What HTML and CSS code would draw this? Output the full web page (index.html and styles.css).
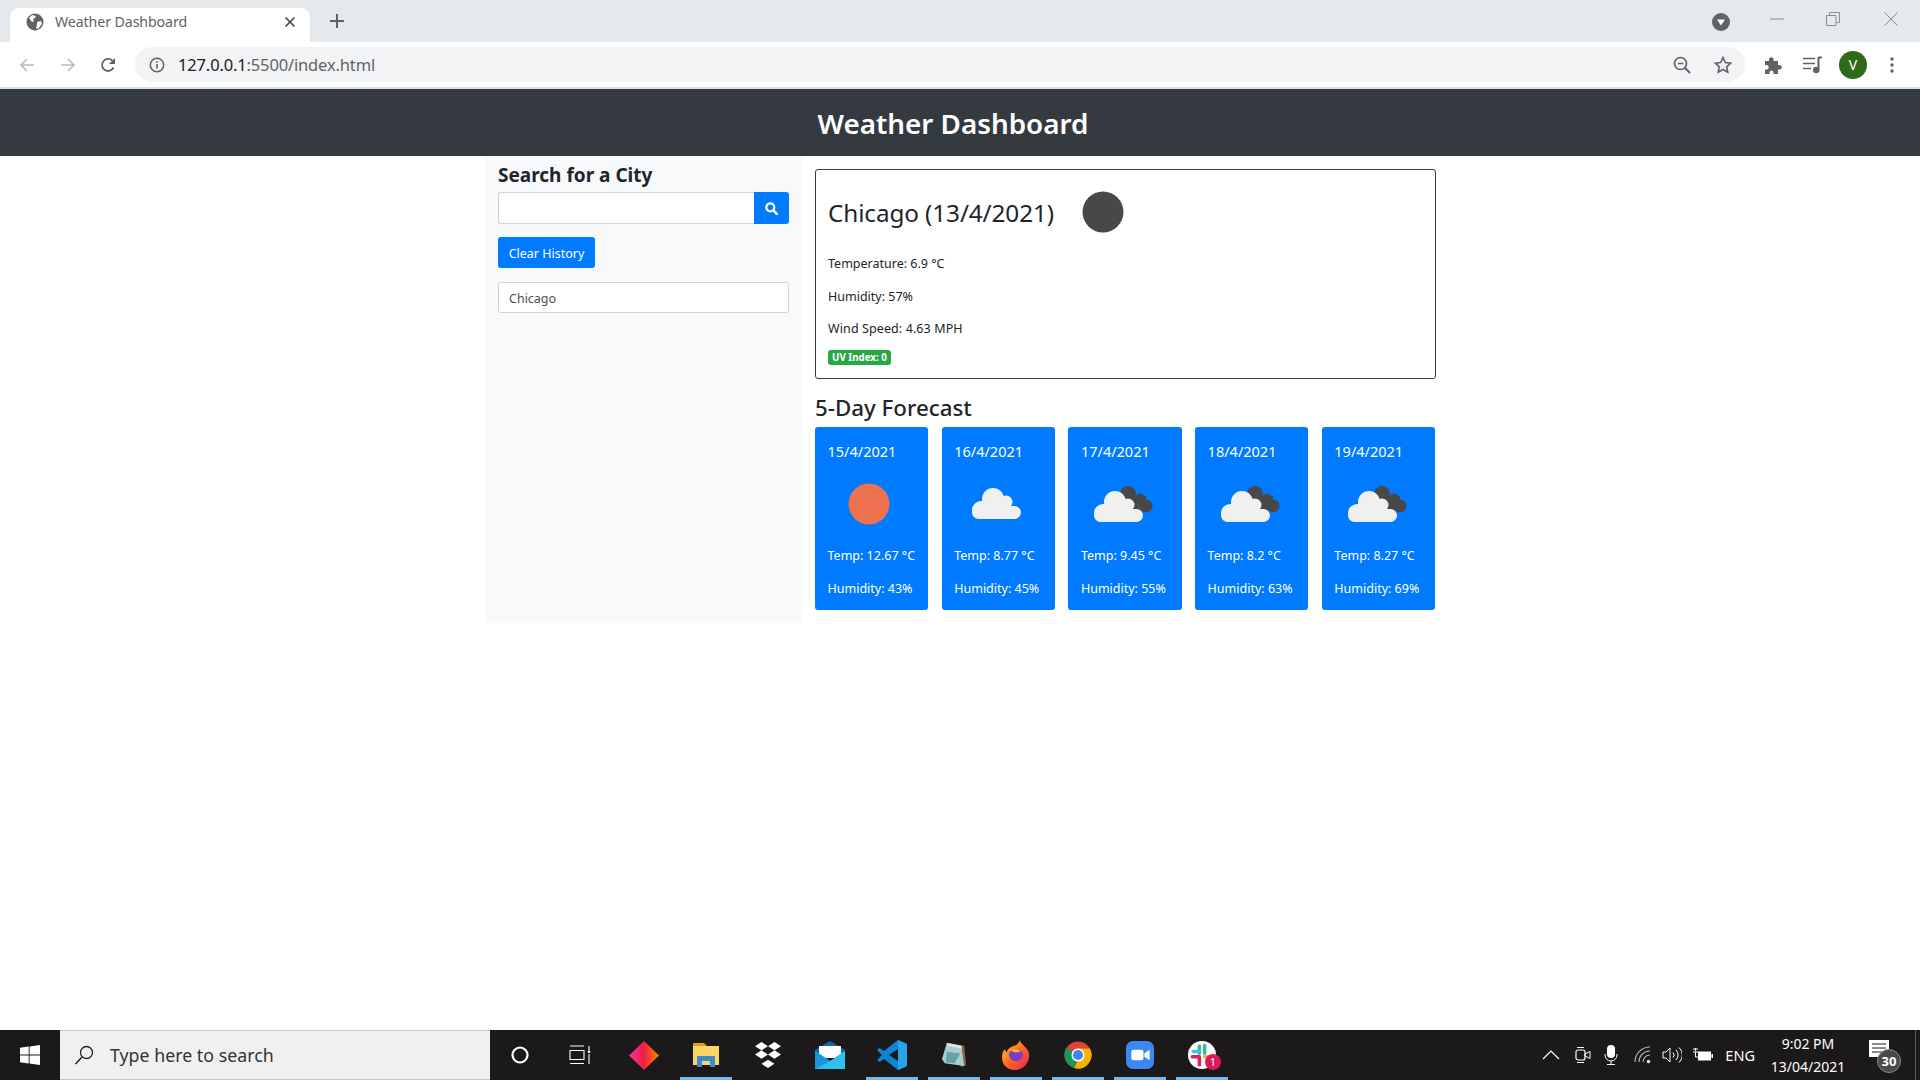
FILE: index.html
```html
<!DOCTYPE html>
<html lang="en">
<head>
<meta charset="utf-8">
<title>Weather Dashboard</title>
<link rel="stylesheet" href="styles.css">
</head>
<body>
<svg class="defs" width="0" height="0" aria-hidden="true">
  <defs>
    <g id="cloud-light">
      <circle cx="34" cy="39" r="11"/><circle cx="47" cy="42" r="6.5"/><circle cx="22" cy="50" r="9"/>
      <rect x="13" y="46" width="49" height="13" rx="6.5"/><rect x="22" y="41" width="25" height="18"/>
    </g>
    <g id="broken">
      <g fill="#48484a"><circle cx="47" cy="31" r="8"/><circle cx="59" cy="35" r="4.5"/><circle cx="65" cy="43" r="6.5"/><rect x="45" y="33" width="20" height="14"/></g>
      <use href="#cloud-light" fill="#f0f0f0"/>
    </g>
  </defs>
</svg>

<header class="browser">
  <div class="tabstrip">
    <div class="tab">
      <svg class="favicon" viewBox="0 0 18 18"><circle cx="9" cy="9" r="8.5" fill="#5f6368"/><path d="M3 5l3-3 4 1-1 2-2 1 1 2-2 1zM11 9l4-1 1 3-4 5-2-1 1-3z" fill="#fff"/></svg>
      <span class="tab-title">Weather Dashboard</span>
      <svg class="tab-close" viewBox="0 0 12 12"><path d="M1.5 1.5l9 9M10.5 1.5l-9 9" stroke="#44474a" stroke-width="1.7"/></svg>
    </div>
    <svg class="tab-new" viewBox="0 0 16 16"><path d="M8 1v14M1 8h14" stroke="#5f6368" stroke-width="2"/></svg>
    <svg class="tab-search" viewBox="0 0 18 18"><circle cx="9" cy="9" r="9" fill="#5f6368"/><path d="M5 6.5h8l-4 6z" fill="#fff"/></svg>
    <svg class="win-btn win-min" viewBox="0 0 14 14"><path d="M0 7h14" stroke="#8a8d90"/></svg>
    <svg class="win-btn win-max" viewBox="0 0 14 14"><path d="M.5 3.5h9.500v10h-9.500zM3.500 3V.5h10v10H10.500" stroke="#8a8d90" fill="none"/></svg>
    <svg class="win-btn win-close" viewBox="0 0 14 14"><path d="M.5.5l13 13M13.500.5l-13 13" stroke="#8a8d90"/></svg>
  </div>
  <div class="toolbar">
    <svg class="nav nav-back" viewBox="0 0 16 16"><path d="M15 8H2M8 2L2 8l6 6" fill="none" stroke="#babcbe" stroke-width="1.700"/></svg>
    <svg class="nav nav-forward" viewBox="0 0 16 16"><path d="M1 8h13M8 2l6 6-6 6" fill="none" stroke="#babcbe" stroke-width="1.700"/></svg>
    <svg class="nav nav-reload" viewBox="0 0 16 16"><path d="M13.500 10.500A6 6 0 1 1 12.300 3.700" fill="none" stroke="#5f6368" stroke-width="1.800"/><path d="M15 1v6H9z" fill="#5f6368"/></svg>
    <div class="omnibox">
      <svg class="info" viewBox="0 0 16 16"><circle cx="8" cy="8" r="6.700" fill="none" stroke="#5f6368" stroke-width="1.500"/><path d="M8 7v4.500M8 4.300v1.500" stroke="#5f6368" stroke-width="1.600"/></svg>
      <span class="url"><span class="url-host">127.0.0.1</span>:5500/index.html</span>
      <svg class="omni-zoom" viewBox="0 0 18 18"><circle cx="7.500" cy="7.500" r="6" fill="none" stroke="#5f6368" stroke-width="1.700"/><path d="M11.800 11.800L17 17" stroke="#5f6368" stroke-width="2"/><path d="M4.800 7.500h5.400" stroke="#5f6368" stroke-width="1.500"/></svg>
      <svg class="omni-star" viewBox="0 0 18 18"><path d="M9 1.500l2.300 5 5.400.6-4 3.700 1.100 5.400L9 13.500l-4.800 2.700 1.100-5.400-4-3.700 5.400-.6z" fill="none" stroke="#5f6368" stroke-width="1.600"/></svg>
    </div>
    <svg class="ext" viewBox="0 0 18 18"><path d="M1 5h4V3.500a2.300 2.300 0 0 1 4.600 0V5h4.400v4h1.500a2.300 2.300 0 0 1 0 4.600H14V18H9.500v-1.500a2 2 0 0 0-4 0V18H1v-4.500h1.500a2.200 2.200 0 0 0 0-4.400H1z" fill="#5f6368"/></svg>
    <svg class="media" viewBox="0 0 20 18"><path d="M0 2.500h12M0 7.500h12M0 12.500h8" stroke="#5f6368" stroke-width="1.700"/><path d="M15.500 1v13" stroke="#5f6368" stroke-width="2"/><path d="M15.500 1.500H19" stroke="#5f6368" stroke-width="2"/><circle cx="13.200" cy="14" r="3.200" fill="#5f6368"/></svg>
    <div class="avatar">V</div>
    <svg class="dots" viewBox="0 0 4 16"><circle cx="2" cy="2" r="1.700"/><circle cx="2" cy="8" r="1.700"/><circle cx="2" cy="14" r="1.700"/></svg>
  </div>
</header>

<div class="app">
  <div class="app-bar"><h1>Weather Dashboard</h1></div>
  <main class="container">
    <aside class="sidebar">
      <h2 class="search-title">Search for a City</h2>
      <div class="search-group">
        <div class="search-input"></div>
        <div class="search-btn">
          <svg viewBox="0 0 14 14" width="13" height="13"><circle cx="5.700" cy="5.700" r="4.300" fill="none" stroke="#fff" stroke-width="2.400"/><path d="M9 9l4 4" stroke="#fff" stroke-width="2.800" stroke-linecap="round"/></svg>
        </div>
      </div>
      <button class="clear-btn" type="button">Clear History</button>
      <div class="history-item">Chicago</div>
    </aside>
    <section class="content">
      <div class="today">
        <div class="today-head">
          <h2 class="today-title">Chicago (13/4/2021)</h2>
          <svg class="wicon" viewBox="0 0 82 82"><circle cx="41" cy="41" r="20.500" fill="#48484a"/></svg>
        </div>
        <p class="stat">Temperature: 6.9 °C</p>
        <p class="stat">Humidity: 57%</p>
        <p class="stat stat-wind">Wind Speed: 4.63 MPH</p>
        <span class="uv">UV Index: 0</span>
      </div>
      <h3 class="forecast-title">5-Day Forecast</h3>
      <div class="forecast">
        <article class="day">
          <div class="day-date">15/4/2021</div>
          <svg class="wicon" viewBox="0 0 82 82"><circle cx="41" cy="41" r="20.500" fill="#ee7150"/></svg>
          <p class="day-stat">Temp: 12.67 °C</p>
          <p class="day-stat">Humidity: 43%</p>
        </article>
        <article class="day">
          <div class="day-date">16/4/2021</div>
          <svg class="wicon" viewBox="0 0 82 82"><use href="#cloud-light" fill="#f0f0f0" transform="translate(4 -3)"/></svg>
          <p class="day-stat">Temp: 8.77 °C</p>
          <p class="day-stat">Humidity: 45%</p>
        </article>
        <article class="day">
          <div class="day-date">17/4/2021</div>
          <svg class="wicon" viewBox="0 0 82 82"><use href="#broken"/></svg>
          <p class="day-stat">Temp: 9.45 °C</p>
          <p class="day-stat">Humidity: 55%</p>
        </article>
        <article class="day">
          <div class="day-date">18/4/2021</div>
          <svg class="wicon" viewBox="0 0 82 82"><use href="#broken"/></svg>
          <p class="day-stat">Temp: 8.2 °C</p>
          <p class="day-stat">Humidity: 63%</p>
        </article>
        <article class="day">
          <div class="day-date">19/4/2021</div>
          <svg class="wicon" viewBox="0 0 82 82"><use href="#broken"/></svg>
          <p class="day-stat">Temp: 8.27 °C</p>
          <p class="day-stat">Humidity: 69%</p>
        </article>
      </div>
    </section>
  </main>
</div>

<footer class="taskbar">
  <div class="start">
    <svg viewBox="0 0 20 20" width="20" height="20"><path d="M0 2.800l8.700-1.200v8H0zM9.600 1.400L20 0v9.600H9.600zM0 10.500h8.700v8L0 17.300zM9.600 10.500H20V20L9.600 18.600z" fill="#fff"/></svg>
  </div>
  <div class="task-search">
    <svg viewBox="0 0 20 20" width="20" height="20"><circle cx="12.500" cy="7.500" r="6" fill="none" stroke="#222" stroke-width="1.300"/><path d="M8 12L1.500 19" stroke="#222" stroke-width="1.500"/></svg>
    <span>Type here to search</span>
  </div>
  <div class="slot slot-cortana"><svg viewBox="0 0 20 20" width="20" height="20"><circle cx="10" cy="10" r="7.500" fill="none" stroke="#fff" stroke-width="2.200"/></svg></div>
  <div class="slot slot-tasks"><svg viewBox="0 0 22 20" width="22" height="20"><path d="M1 1h14M1 5.500h14v9H1zM1 18.500h14M20 1v4M20 9v10" fill="none" stroke="#fff" stroke-width="1.100"/><rect x="18.800" y="5.500" width="2.400" height="2.400" fill="#fff"/></svg></div>
  <div class="slot"><svg viewBox="0 0 30 29" width="30" height="29"><defs><linearGradient id="dia" x1="0" x2="1" y1="0" y2="0"><stop offset="0" stop-color="#f72fa8"/><stop offset=".5" stop-color="#ef2040"/><stop offset="1" stop-color="#f58a00"/></linearGradient></defs><path d="M15 0l15 14.500L15 29 0 14.500z" fill="url(#dia)"/></svg></div>
  <div class="slot on"><svg viewBox="0 0 28 24" width="28" height="24"><path d="M1 0h11l3 3H1z" fill="#e0a010"/><rect x="1" y="3" width="26" height="19" fill="#fcd664"/><path d="M5 24V13h18v11h-5v-6h-8v6z" fill="#3d8ad0"/></svg></div>
  <div class="slot"><svg viewBox="0 0 32 28" width="30" height="26" fill="#fff"><path d="M9 0l7 4.500L9 9 2 4.500zM23 0l7 4.500L23 9l-7-4.500zM9 9l7 4.500L9 18l-7-4.500zM23 9l7 4.500L23 18l-7-4.500zM16 19l7 4.500L16 28l-7-4.500z"/></svg></div>
  <div class="slot"><svg viewBox="0 0 30 28" width="30" height="28"><path d="M0 9L15 0l15 9v3H0z" fill="#0d69b5"/><path d="M4 5h22v12H4z" fill="#fff"/><path d="M0 10l15 10 15-10v18H0z" fill="#29b5ec"/><path d="M0 10l15 10L0 28z" fill="#1796d8"/><path d="M30 10v18H4z" fill="#2fc0f0"/></svg></div>
  <div class="slot on"><svg viewBox="0 0 30 30" width="30" height="30"><path d="M21 0l9 4v22l-9 4L7 19l-4.500 3L0 20l5-5-5-5 2.500-2L7 11z" fill="#0e85d4"/><path d="M21 0l9 4v22l-9 4z" fill="#28a3e8"/><path d="M21 9l-9 6 9 6z" fill="#1a1719"/></svg></div>
  <div class="slot on"><svg viewBox="0 0 28 28" width="27" height="27"><path d="M8 1l16 3 2 20-5 2z" fill="#8a6a3c"/><path d="M6 1l15 3 3 21-20-3-3-4z" fill="#a4d0d6"/><path d="M6 1l15 3 1 3-15-3z" fill="#dfe7e8"/><path d="M6 10l14 2-6 10-9-1z" fill="#6aa0a8"/></svg></div>
  <div class="slot on"><svg viewBox="0 0 30 36" width="28" height="30" preserveAspectRatio="none"><defs><linearGradient id="fx" x1="0" x2="1" y1="0" y2="1"><stop offset="0" stop-color="#ffcf30"/><stop offset=".5" stop-color="#ff6a20"/><stop offset="1" stop-color="#e8185e"/></linearGradient></defs><path d="M19 0c1 5 6 7 9 13 4 10-3 23-14 23C5 36 0 29 0 21c0-4 1-8 3-10l2 4c1-4 4-7 8-8 3-1 5-3 6-7z" fill="url(#fx)"/><circle cx="15" cy="18" r="7.500" fill="#7b3fc4"/><path d="M9 13c3-3 9-3 11 1l-6 1z" fill="#ffb030"/></svg></div>
  <div class="slot on"><svg viewBox="0 0 32 32" width="28" height="28"><circle cx="16" cy="16" r="15.500" fill="#db4437"/><path d="M16 16L2.600 8a15.500 15.500 0 0 0 9 22.500z" fill="#0f9d58"/><path d="M16 8.500h13.500A15.500 15.500 0 0 1 11.600 30.900L19 16z" fill="#f4b400"/><circle cx="16" cy="16" r="7.500" fill="#fff"/><circle cx="16" cy="16" r="5.800" fill="#4285f4"/></svg></div>
  <div class="slot on"><svg viewBox="0 0 32 32" width="28" height="28"><rect width="32" height="32" rx="8" fill="#3f87f5"/><rect x="6" y="10" width="14" height="12" rx="2.500" fill="#fff"/><path d="M21 14l6-4v12l-6-4z" fill="#fff"/></svg></div>
  <div class="slot on slack">
    <svg viewBox="0 0 32 32" width="28" height="28"><circle cx="16" cy="16" r="16" fill="#fff"/><path d="M13 6v8M19 14V5" stroke="#3eb890" stroke-width="4" stroke-linecap="round" fill="none"/><path d="M6 12h7" stroke="#36c5f0" stroke-width="4" stroke-linecap="round"/><path d="M5 18h8" stroke="#e01e5a" stroke-width="4" stroke-linecap="round"/><path d="M13 20v7" stroke="#e01e5a" stroke-width="4" stroke-linecap="round"/><path d="M19 18h7" stroke="#ecb22e" stroke-width="4" stroke-linecap="round"/></svg>
    <span class="slack-badge">1</span>
  </div>
  <div class="tray">
    <svg class="tray-chev" viewBox="0 0 18 10" width="18" height="10"><path d="M1 9l8-8 8 8" fill="none" stroke="#fff" stroke-width="1.200"/></svg>
    <svg class="tray-video" viewBox="0 0 16 20" width="16" height="20"><rect x="1" y="5" width="9" height="10" rx="2" fill="none" stroke="#fff" stroke-width="1.200"/><path d="M10 9l5-2.500v7L10 11z" fill="none" stroke="#fff"/><path d="M2 2.500h7M2 17.500h7" stroke="#fff"/></svg>
    <svg class="tray-mic" viewBox="0 0 14 20" width="14" height="20"><rect x="3" y="0" width="8" height="13" rx="4" fill="#fff"/><path d="M1 9v1a6 6 0 0 0 12 0V9M7 16v3M3 19.500h8" fill="none" stroke="#fff"/></svg>
    <svg class="tray-wifi" viewBox="0 0 18 18" width="18" height="18"><path d="M1 16A15 15 0 0 1 16 1M5 16A11 11 0 0 1 16 5M9 16a7 7 0 0 1 7-7" fill="none" stroke="#b8b8b8" stroke-width="1.100"/><circle cx="14.500" cy="15.500" r="1.700" fill="#fff"/></svg>
    <svg class="tray-vol" viewBox="0 0 20 18" width="20" height="18"><path d="M1 6h3l4-4v14l-4-4H1z" fill="none" stroke="#fff"/><path d="M11 6.500a3.500 3.500 0 0 1 0 5M14 4a7 7 0 0 1 0 10M17 1.500a10 10 0 0 1 0 15" fill="none" stroke="#fff"/></svg>
    <svg class="tray-bat" viewBox="0 0 20 14" width="20" height="14"><path d="M0 4h5M2.500 0v3M1 0v2M4 0v2M2.500 4v5H5" fill="none" stroke="#fff"/><rect x="5" y="3.500" width="13" height="9" fill="#fff"/><rect x="18.500" y="6" width="1.500" height="4" fill="#fff"/></svg>
    <span class="tray-lang">ENG</span>
    <div class="clock"><span>9:02 PM</span><span>13/04/2021</span></div>
    <div class="notify">
      <svg viewBox="0 0 20 18" width="20" height="18"><rect width="20" height="17" fill="#fff"/><path d="M3 4h14M3 8h14M3 12h10" stroke="#1c191b"/></svg>
      <span class="notify-badge">30</span>
    </div>
    <div class="show-desktop"></div>
  </div>
</footer>
</body>
</html>
```

FILE: styles.css
```css
* { box-sizing: border-box; }
html, body { height: 100%; }
body {
  margin: 0;
  display: flex;
  flex-direction: column;
  height: 1080px;
  overflow: hidden;
  background: #fff;
  color: #212529;
  font-family: "Noto Sans", "Open Sans", sans-serif;
}
.defs { display: block; height: 0; }
h1, h2, h3, p { margin: 0; font-weight: 400; }

/* browser frame */
.browser { flex: none; height: 89px; border-bottom: 2px solid #dcdfe2; }
.tabstrip { height: 42px; background: #e6e9ec; display: flex; align-items: center; position: relative; }
.tab {
  width: 300px; height: 34px; margin: 8px 0 0 10px; background: #fff;
  border-radius: 9px 9px 0 0; display: flex; align-items: center; padding: 0 15px 8px 16px;
}
.favicon { width: 18px; height: 18px; margin: 1px 11px 0 0; flex: none; }
.tab-title { font-size: 14.200px; color: #5f6368; letter-spacing: -.1px; white-space: nowrap; }
.tab-close { width: 12px; height: 12px; margin: 1px -1px 0 auto; }
.tab-new { width: 16px; height: 16px; margin: 0 0 0 19px; }
.tab-search { width: 18px; height: 18px; margin: 2px 40px 0 auto; }
.win-btn { width: 14px; height: 14px; margin-top: -4px; }
.win-min { margin-right: 42px; }
.win-max { margin-right: 44px; }
.win-close { margin-right: 22px; }
.toolbar { height: 45px; background: #fff; display: flex; align-items: center; }
.nav { width: 16px; height: 16px; }
.nav-back { margin-left: 19px; }
.nav-forward { margin-left: 25px; }
.nav-reload { margin-left: 24px; }
.omnibox {
  width: 1610px; height: 35px; margin-left: 19px; background: #f1f3f4;
  border-radius: 18px; display: flex; align-items: center;
}
.info { width: 16px; height: 16px; margin-left: 14px; }
.url { margin-left: 13px; font-size: 16.500px; color: #5f6368; letter-spacing: -.15px; }
.url-host { color: #202124; }
.omni-zoom { width: 18px; height: 18px; margin-left: auto; }
.omni-star { width: 18px; height: 18px; margin: 0 13px 0 23px; }
.ext { width: 18px; height: 18px; margin-left: 19px; }
.media { width: 20px; height: 18px; margin-left: 21px; }
.avatar {
  width: 28px; height: 28px; border-radius: 50%; margin-left: 16px; background: #2e6a1a; color: #fff;
  font-size: 14px; display: flex; align-items: center; justify-content: center;
}
.dots { width: 4px; height: 16px; margin-left: 23px; fill: #5f6368; }

/* page */
.app { flex: 1; min-height: 0; }
.app-bar { height: 67px; background: #343a40; display: flex; align-items: center; justify-content: center; padding: 0 14px 0 0; }
.app-bar h1 { color: #fff; font-size: 27.800px; font-weight: 600; line-height: 40px; }
.container { width: 950px; margin: 0 auto; display: flex; align-items: stretch; }
.sidebar { width: 317px; flex: none; background: #f8f9fa; padding: 7px 13px 0; }
.search-title { font-size: 19px; font-weight: 700; line-height: 24px; margin-bottom: 5px; }
.search-group { display: flex; height: 32px; }
.search-input { flex: 1; background: #fff; border: 1px solid #ced4da; border-right: 0; border-radius: 3px 0 0 3px; }
.search-btn { width: 35px; background: #007bff; border-radius: 0 3px 3px 0; display: flex; align-items: center; justify-content: center; }
.clear-btn {
  display: block; margin-top: 13px; width: 97px; height: 31px; padding: 2px 0 0; border: 0; border-radius: 3px;
  background: #007bff; color: #fff; font: inherit; font-size: 12.500px;
}
.history-item {
  margin-top: 14px; height: 31px; padding: 1px 10px 0; line-height: 30px; background: #fff;
  border: 1px solid #ced4da; border-radius: 3px; color: #495057; font-size: 12.500px;
}
.content { flex: 1; min-width: 0; padding: 13px 0 13px 13px; }
.today { height: 210px; margin-right: -1px; border: 1px solid #343a40; border-radius: 3px; padding: 2px 12px 0; }
.today-head { display: flex; align-items: center; height: 82px; margin-top: -1px; margin-bottom: 1px; }
.today-title { font-size: 24.300px; line-height: 40px; margin: 2px 8px 0 0; letter-spacing: -.1px; }
.wicon { width: 82px; height: 82px; display: block; }
.stat { font-size: 12.500px; line-height: 20px; margin-bottom: 12.500px; }
.stat-wind { letter-spacing: .1px; }
.uv {
  display: inline-block; height: 15px; padding: 0 4px; margin-top: -1.500px; vertical-align: top; background: #28a745; color: #fff;
  border-radius: 3px; font-size: 9.800px; font-weight: 700; line-height: 15px;
}
.forecast-title { font-size: 22.300px; line-height: 30px; margin: 14px 0 4px; font-weight: 500; }
.forecast { display: flex; gap: 13.500px; }
.day { flex: 1; height: 183px; background: #007bff; color: #fff; border-radius: 3px; padding: 12px 13px 0 12.500px; }
.day-date { font-size: 14.500px; line-height: 24px; white-space: nowrap; }
.day-stat { font-size: 12.500px; line-height: 20px; margin-bottom: 13px; white-space: nowrap; }
.day .wicon { margin-bottom: 1px; margin-left: .5px; }

/* taskbar */
.taskbar { flex: none; height: 50px; background: #1c191b; display: flex; align-items: stretch; color: #fff; }
.start { width: 60px; display: flex; align-items: center; justify-content: center; }
.task-search {
  width: 430px; background: #f0f0f0; border-top: 1px solid #c4c4c4; border-bottom: 1px solid #c4c4c4;
  display: flex; align-items: center; padding-left: 14px; color: #333; font-size: 17.800px;
}
.task-search span { margin-left: 16px; }
.slot { width: 62px; flex: none; position: relative; display: flex; align-items: center; justify-content: center; }
.slot-cortana { width: 61px; padding-right: 1px; }
.slot-tasks { padding-right: 5px; }
.slot.on::after { content: ""; position: absolute; left: 5px; right: 5px; bottom: 0; height: 3px; background: #76b9ed; }
.slack-badge {
  position: absolute; left: 34px; top: 24px; width: 16px; height: 16px; border-radius: 50%; background: #d91a56;
  color: #fff; font-size: 11px; line-height: 16px; text-align: center;
}
.tray { margin-left: auto; display: flex; align-items: center; }
.tray-chev { margin-right: 15px; }
.tray-video { margin-right: 13px; }
.tray-mic { margin-right: 16px; }
.tray-wifi { margin-right: 10px; }
.tray-vol { margin-right: 11px; }
.tray-bat { margin-right: 12px; }
.tray-lang { font-size: 14.500px; margin-right: 14px; }
.clock { width: 78px; display: flex; flex-direction: column; align-items: center; font-size: 14px; line-height: 23px; margin-right: 22px; }
.notify { position: relative; width: 30px; height: 30px; margin-right: 16px; }
.notify svg { position: absolute; left: 0; top: 0; }
.notify-badge {
  position: absolute; left: 8px; top: 9px; width: 24px; height: 24px; border-radius: 50%; border: 1px solid #888;
  background: #4a4a4a; color: #fff; font-size: 13px; font-weight: 700; line-height: 22px; text-align: center;
}
.show-desktop { width: 1px; height: 50px; background: #55595c; margin-right: 4px; }
```
